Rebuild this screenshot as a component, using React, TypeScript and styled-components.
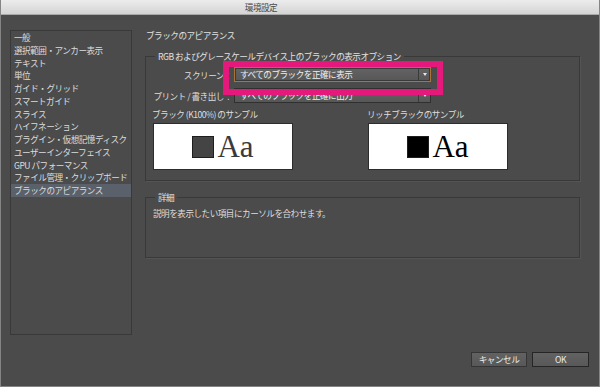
import * as React from 'react'
import styled, { createGlobalStyle } from 'styled-components'

const GlobalStyle = createGlobalStyle`
  html, body {
    margin: 0;
    padding: 0;
    background: #4b4b4b;
  }
  body {
    font-family: 'Noto Sans CJK JP', 'Liberation Sans', sans-serif;
    -webkit-font-smoothing: antialiased;
  }
`

const Window = styled.div`
  width: 600px;
  height: 387px;
  box-sizing: border-box;
  background: #4b4b4b;
  border-left: 1px solid #858585;
  border-right: 1px solid #858585;
  border-bottom: 1px solid #858585;
  display: flex;
  flex-direction: column;
  overflow: hidden;
  font-size: 8.6px;
  letter-spacing: -0.5px;
  color: #dedede;
`

const TitleBar = styled.div`
  height: 15px;
  flex: none;
  box-sizing: border-box;
  background: linear-gradient(180deg, #ececec 0%, #d4d4d4 100%);
  border-bottom: 1px solid #a9a9a9;
  display: flex;
  align-items: center;
  justify-content: center;
  padding-right: 78px;
  color: #4a4a4a;
  font-size: 8.6px;
  line-height: 14px;
`

const MainRow = styled.div`
  display: flex;
  gap: 13px;
  padding: 15px 0 0 9px;
`

const Sidebar = styled.div`
  width: 122px;
  height: 305px;
  box-sizing: border-box;
  border: 1px solid #393939;
  padding-top: 0px;
  display: flex;
  flex-direction: column;
`

const SidebarItem = styled.div<{ $active?: boolean }>`
  height: 12.75px;
  line-height: 12.75px;
  padding-left: 3px;
  white-space: nowrap;
  color: #dcdcdc;
  background: ${({ $active }) => ($active ? '#5b616b' : 'transparent')};
`

const Content = styled.div`
  width: 435px;
  display: flex;
  flex-direction: column;
`

const PanelTitle = styled.div`
  height: 10px;
  line-height: 10px;
  padding-left: 1px;
  margin-bottom: 11px;
  color: #e2e2e2;
`

const Group = styled.fieldset<{ $padBottom: number }>`
  position: relative;
  margin: 0;
  min-inline-size: 0;
  border: 1px solid #393939;
  box-shadow: 1px 1px 0 rgba(255, 255, 255, 0.05);
  padding: 6px 6px ${({ $padBottom }) => $padBottom}px 6px;
  & + & {
    margin-top: 11px;
  }
`

const Legend = styled.legend`
  margin-left: 3px;
  padding: 0 3px;
  line-height: 10px;
  color: #e2e2e2;
`

const OptionRow = styled.div`
  display: flex;
  align-items: center;
  height: 15px;
  & + & {
    margin-top: 6px;
  }
`

const OptionLabel = styled.div`
  width: 80px;
  padding-right: 2px;
  text-align: right;
  white-space: nowrap;
  color: #dedede;
`

const Select = styled.div<{ $focused?: boolean }>`
  width: 197px;
  height: 15px;
  box-sizing: border-box;
  display: flex;
  background: linear-gradient(180deg, #636363 0%, #575757 100%);
  border: 1px solid ${({ $focused }) => ($focused ? '#a8743c' : '#303030')};
  box-shadow: ${({ $focused }) => ($focused ? 'inset 0 0 0 1px #3a3a3a' : 'none')};
`

const SelectText = styled.div`
  flex: 1;
  line-height: 13px;
  padding-left: 5px;
  color: #f0f0f0;
  white-space: nowrap;
`

const SelectArrow = styled.div`
  width: 11px;
  border-left: 1px solid #3a3a3a;
  display: flex;
  align-items: center;
  justify-content: center;
  &::after {
    content: '';
    border-left: 2.5px solid transparent;
    border-right: 2.5px solid transparent;
    border-top: 3px solid #e8e8e8;
  }
`

const SampleGrid = styled.div`
  display: grid;
  grid-template-columns: 215px 1fr;
  margin-top: 6px;
`

const SampleLabel = styled.div`
  height: 10px;
  line-height: 10px;
  margin-bottom: 4px;
  white-space: nowrap;
  color: #dedede;
`

const SampleBox = styled.div`
  width: 140px;
  height: 47px;
  margin-left: 1px;
  box-sizing: border-box;
  background: #ffffff;
  border: 1px solid #2c2c2c;
  display: flex;
  align-items: center;
  justify-content: center;
  gap: 3px;
`

const Swatch = styled.div<{ $fill: string }>`
  width: 22px;
  height: 22px;
  box-sizing: border-box;
  background: ${({ $fill }) => $fill};
  border: 1px solid #1e1e1e;
`

const SampleText = styled.span<{ $color: string }>`
  font-family: 'Liberation Serif', serif;
  font-size: 31px;
  letter-spacing: 0;
  line-height: 30px;
  color: ${({ $color }) => $color};
`

const Description = styled.div`
  line-height: 10px;
  padding-left: 1px;
  color: #dedede;
`

const Highlight = styled.div`
  position: absolute;
  left: 77px;
  top: 0px;
  width: 220px;
  height: 34px;
  box-sizing: border-box;
  border: 6px solid #e5197c;
  pointer-events: none;
`

const Footer = styled.div`
  display: flex;
  justify-content: flex-end;
  gap: 5px;
  margin-top: 17px;
  padding-right: 10px;
`

const Button = styled.div<{ $width: number; $default?: boolean }>`
  width: ${({ $width }) => $width}px;
  height: 15px;
  box-sizing: border-box;
  background: linear-gradient(180deg, #626262 0%, #585858 100%);
  border: 1px solid ${({ $default }) => ($default ? '#262626' : '#353535')};
  text-align: center;
  line-height: 13px;
  color: #ececec;
`

const items = [
  '一般',
  '選択範囲・アンカー表示',
  'テキスト',
  '単位',
  'ガイド・グリッド',
  'スマートガイド',
  'スライス',
  'ハイフネーション',
  'プラグイン・仮想記憶ディスク',
  'ユーザーインターフェイス',
  'GPU パフォーマンス',
  'ファイル管理・クリップボード',
  'ブラックのアピアランス',
]

const App = () => {
  return (
    <>
      <GlobalStyle />
      <Window>
        <TitleBar>環境設定</TitleBar>
        <MainRow>
          <Sidebar>
            {items.map((item, i) => (
              <SidebarItem key={i} $active={i === items.length - 1}>
                {item}
              </SidebarItem>
            ))}
          </Sidebar>
          <Content>
            <PanelTitle>ブラックのアピアランス</PanelTitle>
            <Group $padBottom={10}>
              <Legend>RGB およびグレースケールデバイス上のブラックの表示オプション</Legend>
              <OptionRow>
                <OptionLabel>スクリーン：</OptionLabel>
                <Select $focused>
                  <SelectText>すべてのブラックを正確に表示</SelectText>
                  <SelectArrow />
                </Select>
              </OptionRow>
              <OptionRow>
                <OptionLabel>プリント / 書き出し：</OptionLabel>
                <Select>
                  <SelectText>すべてのブラックを正確に出力</SelectText>
                  <SelectArrow />
                </Select>
              </OptionRow>
              <SampleGrid>
                <div>
                  <SampleLabel>ブラック (K100%) のサンプル</SampleLabel>
                  <SampleBox>
                    <Swatch $fill="#444444" />
                    <SampleText $color="#3a3a3a">Aa</SampleText>
                  </SampleBox>
                </div>
                <div>
                  <SampleLabel>リッチブラックのサンプル</SampleLabel>
                  <SampleBox>
                    <Swatch $fill="#000000" />
                    <SampleText $color="#000000">Aa</SampleText>
                  </SampleBox>
                </div>
              </SampleGrid>
              <Highlight />
            </Group>
            <Group $padBottom={39}>
              <Legend>詳細</Legend>
              <Description>説明を表示したい項目にカーソルを合わせます。</Description>
            </Group>
          </Content>
        </MainRow>
        <Footer>
          <Button $width={56}>キャンセル</Button>
          <Button $width={57} $default>
            OK
          </Button>
        </Footer>
      </Window>
    </>
  )
}

export default App
